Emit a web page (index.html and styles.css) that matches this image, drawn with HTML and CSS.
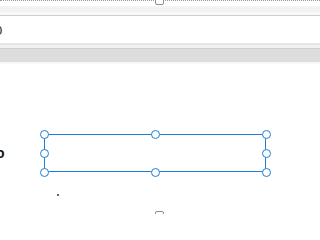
FILE: index.html
```html
<!DOCTYPE html>
<html>
<head>
<meta charset="utf-8">
<link rel="stylesheet" href="styles.css">
</head>
<body>
<div class="page">
  <div class="top-edge"><span class="edge-handle top"></span></div>
  <div class="band-light"></div>
  <div class="band-lighter"></div>
  <div class="rule"></div>
  <div class="field"><span class="field-text">0</span></div>
  <div class="rule soft"></div>
  <div class="band-mid"></div>
  <div class="rule"></div>
  <div class="band-gray"></div>
  <div class="band-fade"></div>
  <div class="canvas">
    <div class="canvas-row">
      <span class="glyph">o</span>
      <div class="selection">
        <span class="h tl"></span><span class="h tm"></span><span class="h tr"></span>
        <span class="h ml"></span><span class="h mr"></span>
        <span class="h bl"></span><span class="h bm"></span><span class="h br"></span>
      </div>
    </div>
    <div class="dot-row"><span class="dot"></span></div>
    <span class="edge-handle bottom"></span>
  </div>
</div>
</body>
</html>
```
FILE: styles.css
```css
html, body {
  margin: 0;
  padding: 0;
  background: #ffffff;
  font-family: "Liberation Sans", Arial, sans-serif;
}
.page {
  width: 320px;
  height: 214px;
  overflow: hidden;
  position: relative;
  display: flex;
  flex-direction: column;
}
.top-edge {
  height: 5px;
  border-top: 1px dotted #9a9a9a;
  position: relative;
  flex: none;
}
.edge-handle {
  position: absolute;
  width: 7px;
  height: 7px;
  border: 1px solid #8c8c8c;
  border-radius: 2px;
  background: #ffffff;
  left: 155px;
}
.edge-handle.top { top: -5px; }
.edge-handle.bottom { bottom: -6px; }
.band-light { height: 6px; background: #f3f3f3; flex: none; }
.band-lighter { height: 3px; background: #f8f8f8; flex: none; }
.rule { height: 1px; background: #cfcfcf; flex: none; }
.rule.soft { height: 2px; background: #e6e6e6; }
.field {
  height: 27px;
  background: #ffffff;
  display: flex;
  align-items: center;
  flex: none;
}
.field-text {
  font-size: 13px;
  color: #222;
  margin-left: -5px;
  margin-top: 2px;
  line-height: 1;
}
.band-mid { height: 3px; background: #f1f1f1; flex: none; }
.band-gray { height: 13px; background: #dddddd; flex: none; }
.band-fade { height: 3px; background: linear-gradient(#f3f3f3, #ffffff); flex: none; }
.canvas {
  flex: 1;
  position: relative;
  background: #ffffff;
}
.canvas-row {
  margin-top: 69px;
  display: flex;
  align-items: center;
  height: 38px;
}
.glyph {
  font-size: 14px;
  font-weight: bold;
  color: #111;
  margin-left: -4px;
  width: 48px;
  line-height: 1;
}
.selection {
  position: relative;
  width: 222px;
  height: 38px;
  border: 1.5px solid #1f7fd6;
  box-sizing: border-box;
}
.h {
  position: absolute;
  width: 9px;
  height: 9px;
  border: 1.3px solid #1f7fd6;
  border-radius: 50%;
  background: #ffffff;
  box-sizing: border-box;
  margin: -4.5px 0 0 -4.5px;
}
.tl { left: -1px; top: -1px; }
.tm { left: 50%; top: -1px; }
.tr { left: calc(100% + 1px); top: -1px; }
.ml { left: -1px; top: 50%; }
.mr { left: calc(100% + 1px); top: 50%; }
.bl { left: -1px; top: calc(100% + 1px); }
.bm { left: 50%; top: calc(100% + 1px); }
.br { left: calc(100% + 1px); top: calc(100% + 1px); }
.dot-row {
  margin-top: 22px;
  padding-left: 57px;
  height: 2px;
}
.dot {
  display: block;
  width: 2px;
  height: 2px;
  background: #333;
  border-radius: 1px;
}
```
